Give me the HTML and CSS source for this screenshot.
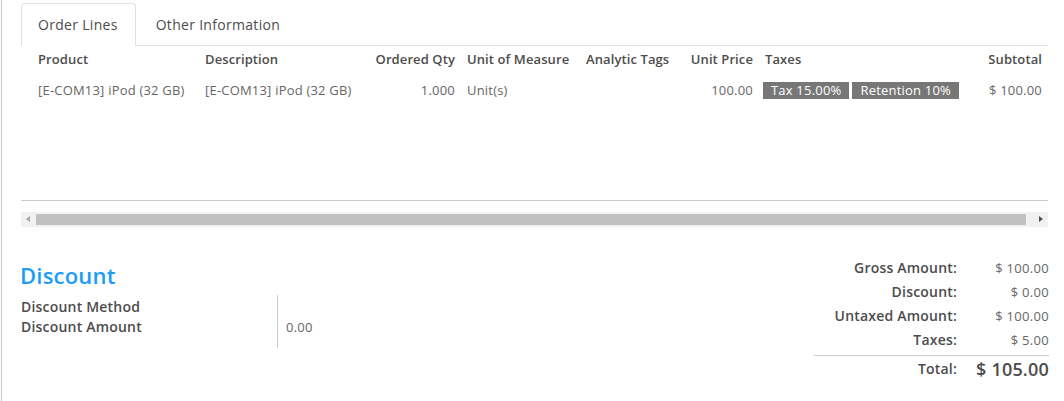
FILE: index.html
```html
<!DOCTYPE html>
<html>
<head>
<meta charset="utf-8">
<link rel="stylesheet" href="styles.css">
</head>
<body>
<div class="sheet">
  <div class="tabs">
    <div class="tab active">Order Lines</div>
    <div class="tab">Other Information</div>
  </div>
  <div class="lines">
    <table class="grid">
      <colgroup>
        <col class="c-sp"><col class="c-prod"><col class="c-desc"><col class="c-qty"><col class="c-uom"><col class="c-tags"><col class="c-price"><col class="c-taxes"><col class="c-sub">
      </colgroup>
      <thead>
        <tr>
          <th></th>
          <th>Product</th>
          <th>Description</th>
          <th class="num">Ordered Qty</th>
          <th>Unit of Measure</th>
          <th>Analytic Tags</th>
          <th class="num">Unit Price</th>
          <th>Taxes</th>
          <th class="num">Subtotal</th>
        </tr>
      </thead>
      <tbody>
        <tr>
          <td></td>
          <td>[E-COM13] iPod (32 GB)</td>
          <td>[E-COM13] iPod (32 GB)</td>
          <td class="num">1.000</td>
          <td>Unit(s)</td>
          <td></td>
          <td class="num">100.00</td>
          <td class="taxcell"><span class="tag">Tax 15.00%</span><span class="tag">Retention 10%</span></td>
          <td class="num">$ 100.00</td>
        </tr>
      </tbody>
    </table>
  </div>
  <div class="scrollbar">
    <span class="arrow left"></span>
    <span class="thumb"></span>
    <span class="arrow right"></span>
  </div>
  <div class="bottom">
    <div class="discount">
      <div class="heading">Discount</div>
      <div class="dgrid">
        <div class="labels">
          <div class="lbl">Discount Method</div>
          <div class="lbl">Discount Amount</div>
        </div>
        <div class="values">
          <div class="val"></div>
          <div class="val">0.00</div>
        </div>
      </div>
    </div>
    <div class="totals">
      <div class="trow"><span class="tl">Gross Amount:</span><span class="tv">$ 100.00</span></div>
      <div class="trow"><span class="tl">Discount:</span><span class="tv">$ 0.00</span></div>
      <div class="trow"><span class="tl">Untaxed Amount:</span><span class="tv">$ 100.00</span></div>
      <div class="trow"><span class="tl">Taxes:</span><span class="tv">$ 5.00</span></div>
      <div class="trow total"><span class="tl">Total:</span><span class="tv">$ 105.00</span></div>
    </div>
  </div>
</div>
</body>
</html>
```
FILE: styles.css
```css
html, body {
  margin: 0;
  padding: 0;
  background: #fff;
}
body {
  font-family: "Open Sans", "Noto Sans", sans-serif;
  font-size: 13px;
  letter-spacing: 0.2px;
  color: #666;
  width: 1064px;
  height: 401px;
  overflow: hidden;
}
.sheet {
  border-left: 1px solid #ccc;
  margin-left: 1px;
  height: 401px;
  box-sizing: border-box;
  padding: 3px 17px 0 19px;
}
.tabs {
  display: flex;
  border-bottom: 1px solid #dee2e6;
  height: 42px;
  width: 1027px;
}
.tab {
  padding: 0 17px 0 16px;
  line-height: 41px;
  font-size: 14px;
  color: #4c4c4c;
  border: 1px solid transparent;
  border-bottom: none;
  border-radius: 4px 4px 0 0;
  letter-spacing: 0.3px;
}
.tab + .tab {
  margin-left: 3px;
}
.tab.active {
  border-color: #dee2e6;
  background: #fff;
  height: 42px;
  margin-bottom: -1px;
}
.lines {
  width: 1027px;
  height: 154px;
  border-bottom: 1px solid #ccc;
}
.grid {
  width: 1027px;
  border-collapse: collapse;
  table-layout: fixed;
}
.c-sp { width: 11px; }
.c-prod { width: 167px; }
.c-desc { width: 162px; }
.c-qty { width: 100px; }
.c-uom { width: 119px; }
.c-tags { width: 103px; }
.c-price { width: 76px; }
.c-taxes { width: 219px; }
.c-sub { width: 70px; }
.grid th, .grid td {
  padding: 0 6px;
  white-space: nowrap;
  overflow: visible;
  text-align: left;
}
.grid th {
  height: 26px;
  font-weight: 600;
  letter-spacing: 0.1px;
  color: #4c4c4c;
}
.grid td {
  height: 34px;
  padding-top: 1px;
  color: #666;
}
.grid th.num, .grid td.num {
  text-align: right;
}
.grid td.taxcell {
  padding-left: 4px;
}
.tag {
  display: inline-block;
  background: #777;
  color: #fff;
  padding: 0 8px;
  line-height: 17px;
  margin-right: 3px;
}
.scrollbar {
  margin-top: 11px;
  width: 1027px;
  height: 15px;
  background: #f1f1f1;
  display: flex;
  align-items: center;
}
.thumb {
  flex: 1;
  height: 11px;
  background: #c1c1c1;
  margin: 0 7px 0 0;
}
.arrow {
  width: 15px;
  height: 15px;
  position: relative;
}
.arrow::after {
  content: "";
  position: absolute;
  top: 4px;
  border-top: 3.5px solid transparent;
  border-bottom: 3.5px solid transparent;
}
.arrow.left::after {
  left: 5px;
  border-right: 4px solid #a3a3a3;
}
.arrow.right::after {
  left: 6px;
  border-left: 4px solid #505050;
}
.bottom {
  display: flex;
  justify-content: space-between;
  width: 1028px;
  margin-top: 24px;
}
.discount {
  padding-top: 10px;
}
.heading {
  font-size: 22px;
  font-weight: 600;
  color: #1a9cf7;
  line-height: 28px;
  margin-bottom: 6px;
  margin-left: -1px;
  letter-spacing: 0.2px;
}
.dgrid {
  display: flex;
}
.labels {
  width: 256px;
  border-right: 1px solid #ccc;
  padding: 2px 0 11px;
}
.lbl {
  font-size: 14px;
  font-weight: 600;
  color: #4c4c4c;
  line-height: 20px;
  letter-spacing: 0.2px;
}
.values {
  padding: 2px 0 0 8px;
}
.val {
  line-height: 20px;
  height: 20px;
}
.totals {
  width: 235px;
  padding-top: 5px;
}
.trow {
  display: flex;
  justify-content: flex-end;
  line-height: 24px;
}
.tl {
  font-size: 14px;
  font-weight: 600;
  color: #4c4c4c;
  text-align: right;
  letter-spacing: 0.2px;
}
.tv {
  width: 92px;
  text-align: right;
  letter-spacing: 0.3px;
}
.trow.total {
  border-top: 1px solid #ccc;
  margin-top: 3px;
  line-height: 26px;
}
.trow.total .tv {
  font-size: 18px;
  font-weight: 600;
  color: #4c4c4c;
  letter-spacing: 0.2px;
}
```
